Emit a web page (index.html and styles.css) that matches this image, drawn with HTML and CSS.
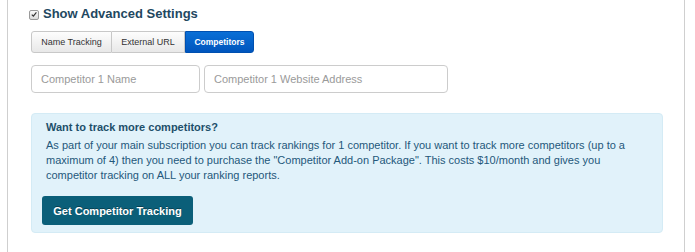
FILE: index.html
```html
<!DOCTYPE html>
<html>
<head>
<meta charset="utf-8">
<link rel="stylesheet" href="styles.css">
</head>
<body>
<div class="panel">
  <div class="adv-head">
    <span class="check">
      <svg width="9" height="9" viewBox="0 0 9 9"><path d="M2 4.6 L3.8 6.4 L7.2 2.2" fill="none" stroke="#333" stroke-width="1.3"/></svg>
    </span>
    <h2 class="adv-title">Show Advanced Settings</h2>
  </div>
  <div class="tabs">
    <span class="tab tab-name">Name Tracking</span>
    <span class="tab tab-url">External URL</span>
    <span class="tab tab-comp active">Competitors</span>
  </div>
  <div class="fields">
    <input class="field field-name" type="text" placeholder="Competitor 1 Name">
    <input class="field field-site" type="text" placeholder="Competitor 1 Website Address">
  </div>
  <div class="info">
    <h4 class="info-title">Want to track more competitors?</h4>
    <p class="info-text">As part of your main subscription you can track rankings for 1 competitor. If you want to track more competitors (up to a maximum of 4) then you need to purchase the "Competitor Add-on Package". This costs $10/month and gives you competitor tracking on ALL your ranking reports.</p>
    <button class="cta">Get Competitor Tracking</button>
  </div>
</div>
</body>
</html>
```
FILE: styles.css
```css
html, body {
  margin: 0;
  padding: 0;
  background: #fff;
}
body {
  font-family: "Liberation Sans", Arial, sans-serif;
}
.panel {
  margin-left: 7px;
  width: 678px;
  height: 252px;
  box-sizing: border-box;
  border-left: 1px solid #cfcfcf;
  border-right: 1px solid #cfcfcf;
  padding: 6px 0 0 23px;
  display: flex;
  flex-direction: column;
  align-items: flex-start;
}
.adv-head {
  display: flex;
  align-items: center;
  gap: 4px;
  margin-left: -2px;
  height: 16px;
}
.check {
  width: 8px;
  height: 8px;
  border: 1px solid #9a9a9a;
  border-radius: 2px;
  background: linear-gradient(#fafafa, #dcdcdc);
  display: flex;
  align-items: center;
  justify-content: center;
  margin-top: 1px;
}
.check svg {
  display: block;
}
.adv-title {
  margin: 0;
  font-size: 13px;
  font-weight: bold;
  color: #22475f;
  line-height: 16px;
}
.tabs {
  display: flex;
  margin-top: 9px;
  height: 22px;
}
.tab {
  box-sizing: border-box;
  height: 22px;
  display: flex;
  align-items: center;
  justify-content: center;
  font-size: 9px;
  color: #333;
  border: 1px solid #c8c8c8;
  background: linear-gradient(#fdfdfd, #e8e8e8);
}
.tab-name {
  width: 81px;
  border-radius: 3px 0 0 3px;
}
.tab-url {
  width: 73px;
  border-left: none;
}
.tab-comp {
  width: 69px;
  border-radius: 0 3px 3px 0;
}
.tab.active {
  background: linear-gradient(#0a6fd6, #0055bd);
  border-color: #0050b0;
  color: #fff;
  font-weight: bold;
  font-size: 8.5px;
}
.fields {
  display: flex;
  gap: 4px;
  margin-top: 12px;
}
.field {
  box-sizing: border-box;
  height: 28px;
  border: 1px solid #cccccc;
  border-radius: 4px;
  padding: 0 9px;
  font-family: "Liberation Sans", Arial, sans-serif;
  font-size: 11px;
  color: #555;
  background: #fff;
  outline: none;
}
.field::placeholder {
  color: #9a9a9a;
}
.field-name {
  width: 169px;
}
.field-site {
  width: 244px;
}
.info {
  box-sizing: border-box;
  margin-top: 20px;
  width: 632px;
  height: 120px;
  background: #e1f2fa;
  border: 1px solid #d4ebf5;
  border-radius: 4px;
  padding: 6px 14px 0 10px;
}
.info-title {
  margin: 0 0 3px 4px;
  font-size: 11px;
  line-height: 15px;
  font-weight: bold;
  color: #1d4f6a;
}
.info-text {
  margin: 0 0 0 4px;
  font-size: 11px;
  line-height: 15px;
  color: #24587a;
}
.cta {
  margin-top: 13px;
  height: 29px;
  width: 151px;
  border: none;
  border-radius: 3px;
  background: #0b5f79;
  color: #fff;
  font-family: "Liberation Sans", Arial, sans-serif;
  font-size: 11px;
  font-weight: bold;
  text-shadow: 0 -1px 0 rgba(0,0,0,0.35);
  padding: 0;
}
```
